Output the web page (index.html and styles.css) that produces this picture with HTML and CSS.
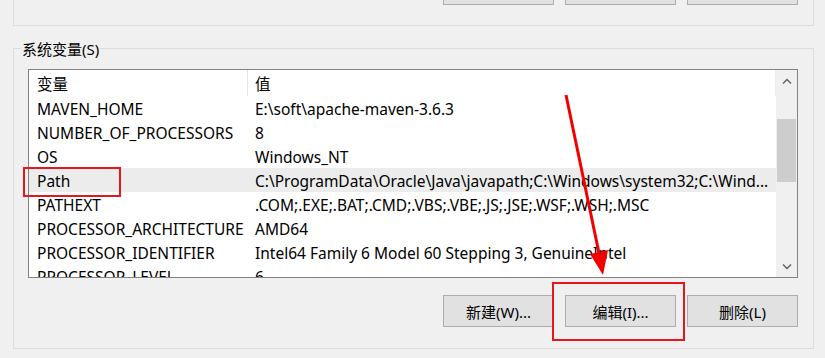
FILE: index.html
```html
<!DOCTYPE html>
<html lang="zh-CN">
<head>
    <meta charset="UTF-8">
    <title>系统变量</title>
    <link rel="stylesheet" href="styles.css">
</head>
<body>
    <div class="window">
        <div class="group group-top">
            <div class="btn-row btn-row-cut">
                <button class="btn"></button>
                <button class="btn"></button>
                <button class="btn"></button>
            </div>
        </div>

        <div class="group group-sys">
            <div class="group-title">系统变量(S)</div>
            <div class="listbox">
                <div class="list-main">
                    <div class="list-head">
                        <div class="col1">变量</div>
                        <div class="col2">值</div>
                    </div>
                    <div class="row"><div class="col1">MAVEN_HOME</div><div class="col2">E:\soft\apache-maven-3.6.3</div></div>
                    <div class="row"><div class="col1">NUMBER_OF_PROCESSORS</div><div class="col2">8</div></div>
                    <div class="row"><div class="col1">OS</div><div class="col2">Windows_NT</div></div>
                    <div class="row selected"><div class="col1">Path</div><div class="col2">C:\ProgramData\Oracle\Java\javapath;C:\Windows\system32;C:\Wind...</div></div>
                    <div class="row"><div class="col1">PATHEXT</div><div class="col2">.COM;.EXE;.BAT;.CMD;.VBS;.VBE;.JS;.JSE;.WSF;.WSH;.MSC</div></div>
                    <div class="row"><div class="col1">PROCESSOR_ARCHITECTURE</div><div class="col2">AMD64</div></div>
                    <div class="row"><div class="col1">PROCESSOR_IDENTIFIER</div><div class="col2">Intel64 Family 6 Model 60 Stepping 3, GenuineIntel</div></div>
                    <div class="row"><div class="col1">PROCESSOR_LEVEL</div><div class="col2">6</div></div>
                </div>
                <div class="scrollbar">
                    <div class="sb-arrow">
                        <svg width="10" height="6" viewBox="0 0 10 6"><path d="M1 5.5 L5 1.5 L9 5.5" fill="none" stroke="#606060" stroke-width="1.4"/></svg>
                    </div>
                    <div class="sb-track">
                        <div class="sb-thumb"></div>
                    </div>
                    <div class="sb-arrow">
                        <svg width="10" height="6" viewBox="0 0 10 6"><path d="M1 0.5 L5 4.5 L9 0.5" fill="none" stroke="#606060" stroke-width="1.4"/></svg>
                    </div>
                </div>
            </div>
            <div class="btn-row">
                <button class="btn">新建(W)...</button>
                <button class="btn">编辑(I)...</button>
                <button class="btn">删除(L)</button>
            </div>
        </div>

        <!-- annotations -->
        <div class="mark mark-path"></div>
        <div class="mark mark-edit"></div>
        <svg class="arrow" width="825" height="358" viewBox="0 0 825 358">
            <line x1="566" y1="95" x2="600" y2="258" stroke="#f20000" stroke-width="3"/>
            <polygon points="603,275 590,254 608,250" fill="#f20000"/>
        </svg>
    </div>
</body>
</html>
```

FILE: styles.css
```css
body {
    margin: 0;
    background-color: #f0f0f0;
    font-family: "Noto Sans", "Noto Sans CJK SC", sans-serif;
    font-size: 15.5px;
    color: #000;
}
.window {
    position: relative;
    width: 825px;
    height: 358px;
    overflow: hidden;
}
.group {
    width: 801px;
    margin-left: 13px;
    border: 1px solid #dcdcdc;
    box-sizing: border-box;
}
.group-top {
    height: 26px;
    border-top: none;
}
.group-sys {
    margin-top: 22px;
    padding-bottom: 21px;
}
.group-title {
    display: table;
    margin: -10px 0 0 7px;
    padding: 0 1px;
    line-height: 20px;
    font-size: 15px;
    background-color: #f0f0f0;
}
.listbox {
    display: flex;
    width: 770px;
    height: 209px;
    margin: 10px 0 0 14px;
    border: 1px solid #828282;
    box-sizing: border-box;
    background-color: #fff;
    overflow: hidden;
}
.list-main {
    flex: 1;
    overflow: hidden;
}
.list-head {
    display: flex;
    height: 26px;
    align-items: center;
    border-right: 1px solid #ececec;
}
.list-head .col1 {
    border-right: 1px solid #e5e5e5;
    align-self: stretch;
    display: flex;
    align-items: center;
}
.row {
    display: flex;
    height: 24px;
    padding-top: 2px;
    box-sizing: border-box;
    align-items: center;
}
.row.selected {
    background-color: #ececec;
}
.col1 {
    width: 219px;
    flex-shrink: 0;
    padding-left: 8px;
    box-sizing: border-box;
    white-space: nowrap;
}
.col2 {
    padding-left: 7px;
    white-space: nowrap;
}
.scrollbar {
    width: 21px;
    display: flex;
    flex-direction: column;
    background-color: #f0f0f0;
}
.sb-arrow {
    height: 21px;
    display: flex;
    align-items: center;
    justify-content: center;
}
.sb-track {
    flex: 1;
    padding: 28px 1px 0 1px;
}
.sb-thumb {
    height: 63px;
    background-color: #cdcdcd;
}
.btn-row {
    display: flex;
    justify-content: flex-end;
    gap: 11px;
    padding-right: 15px;
    margin-top: 17px;
}
.btn-row-cut {
    height: 5px;
    margin-top: 0;
    align-items: flex-end;
    overflow: hidden;
}
.btn {
    width: 111px;
    height: 32px;
    flex-shrink: 0;
    border: 1px solid #adadad;
    background-color: #e1e1e1;
    font-family: "Noto Sans", "Noto Sans CJK SC", sans-serif;
    font-size: 15px;
    color: #000;
    padding: 0;
}
.mark {
    position: absolute;
    border: 2px solid #e5161c;
    box-sizing: border-box;
}
.mark-path {
    left: 23px;
    top: 167px;
    width: 98px;
    height: 30px;
}
.mark-edit {
    left: 552px;
    top: 282px;
    width: 133px;
    height: 59px;
}
.arrow {
    position: absolute;
    left: 0;
    top: 0;
}
```
